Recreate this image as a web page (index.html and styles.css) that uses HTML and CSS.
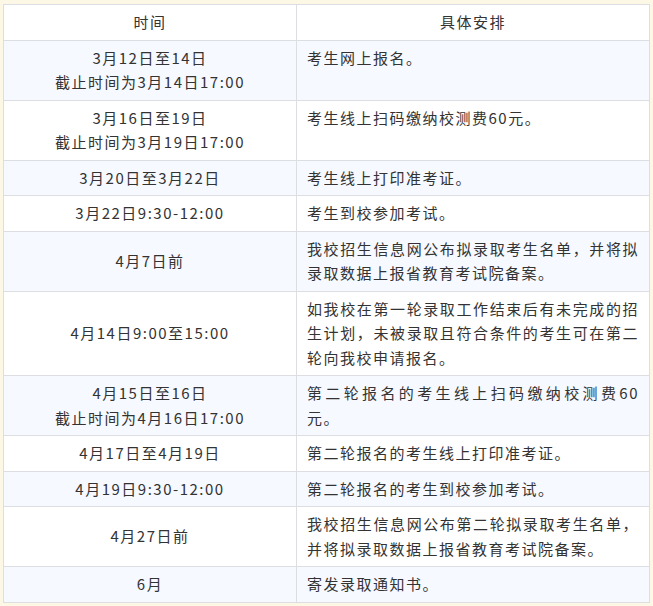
FILE: index.html
```html
<!DOCTYPE html>
<html lang="zh-CN">
<head>
<meta charset="utf-8">
<title>招生日程</title>
<link rel="stylesheet" href="styles.css">
</head>
<body>
<div class="page">
<table class="schedule">
<colgroup><col class="c-time"><col class="c-plan"></colgroup>
<thead>
<tr><th>时间</th><th>具体安排</th></tr>
</thead>
<tbody>
<tr class="alt"><td class="time">3月12日至14日<br>截止时间为3月14日17:00</td><td class="plan">考生网上报名。</td></tr>
<tr><td class="time">3月16日至19日<br>截止时间为3月19日17:00</td><td class="plan">考生线上扫码缴纳校测费60元。</td></tr>
<tr class="alt"><td class="time">3月20日至3月22日</td><td class="plan">考生线上打印准考证。</td></tr>
<tr><td class="time">3月22日9:30-12:00</td><td class="plan">考生到校参加考试。</td></tr>
<tr class="alt"><td class="time">4月7日前</td><td class="plan">我校招生信息网公布拟录取考生名单，并将拟录取数据上报省教育考试院备案。</td></tr>
<tr><td class="time">4月14日9:00至15:00</td><td class="plan">如我校在第一轮录取工作结束后有未完成的招生计划，未被录取且符合条件的考生可在第二轮向我校申请报名。</td></tr>
<tr class="alt"><td class="time">4月15日至16日<br>截止时间为4月16日17:00</td><td class="plan">第二轮报名的考生线上扫码缴纳校测费60元。</td></tr>
<tr><td class="time">4月17日至4月19日</td><td class="plan">第二轮报名的考生线上打印准考证。</td></tr>
<tr class="alt"><td class="time">4月19日9:30-12:00</td><td class="plan">第二轮报名的考生到校参加考试。</td></tr>
<tr><td class="time">4月27日前</td><td class="plan">我校招生信息网公布第二轮拟录取考生名单，并将拟录取数据上报省教育考试院备案。</td></tr>
<tr class="alt"><td class="time">6月</td><td class="plan">寄发录取通知书。</td></tr>
</tbody>
</table>
</div>
</body>
</html>
```

FILE: styles.css
```css
html, body {
  margin: 0;
  padding: 0;
  background: #fdf7e6;
}
.page {
  padding: 4px 3px;
}
.schedule {
  width: 647px;
  table-layout: fixed;
  border-collapse: collapse;
  font-family: "Noto Sans CJK SC", "Noto Sans", sans-serif;
  font-size: 15px;
  letter-spacing: 1.5px;
  line-height: 24.5px;
  color: #333;
}
.c-time { width: 293px; }
.schedule th,
.schedule td {
  border: 1px solid #dcdee2;
  padding: 5px 10px;
  background: #fff;
}
.schedule th {
  font-weight: normal;
  text-align: center;
  vertical-align: middle;
}
.schedule tr.alt td {
  background: #f6f9ff;
}
.schedule td.time {
  text-align: center;
  vertical-align: middle;
}
.schedule td.plan {
  text-align: justify;
  vertical-align: top;
}
```
